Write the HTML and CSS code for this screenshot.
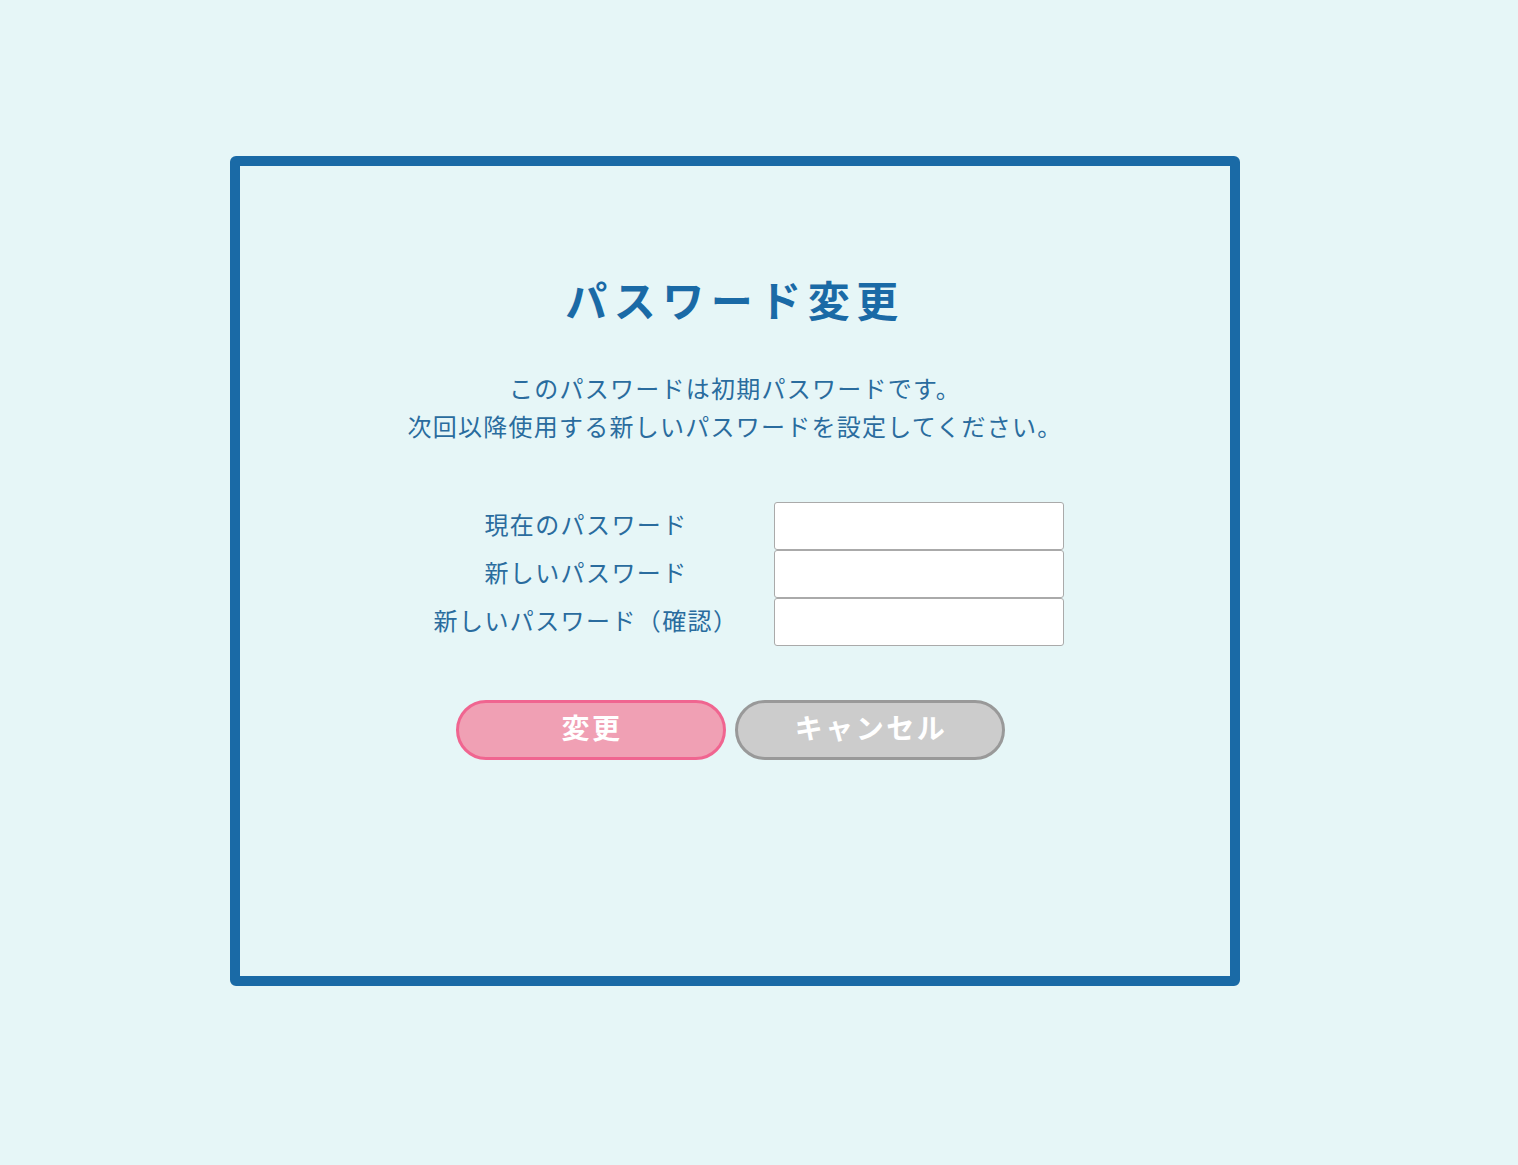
FILE: index.html
```html
<!DOCTYPE html>
<html lang="ja">
<head>
<meta charset="utf-8">
<title>パスワード変更</title>
<link rel="stylesheet" href="styles.css">
</head>
<body>
<div class="panel">
  <h1 class="title">パスワード変更</h1>
  <p class="lead">このパスワードは初期パスワードです。<br>次回以降使用する新しいパスワードを設定してください。</p>
  <form class="form">
    <label class="label" for="cur">現在のパスワード</label>
    <input class="field" id="cur" type="password">
    <label class="label" for="new1">新しいパスワード</label>
    <input class="field" id="new1" type="password">
    <label class="label" for="new2">新しいパスワード（確認）</label>
    <input class="field" id="new2" type="password">
  </form>
  <div class="actions">
    <button class="btn btn-ok" type="button">変更</button>
    <button class="btn btn-cancel" type="button">キャンセル</button>
  </div>
</div>
</body>
</html>
```
FILE: styles.css
```css
html, body {
  margin: 0;
  padding: 0;
}
body {
  background: #e6f6f7;
  font-family: "Noto Sans CJK JP", "Noto Sans", sans-serif;
  color: #1f6ba5;
  padding-top: 156px;
  padding-bottom: 180px;
}
.panel {
  box-sizing: border-box;
  width: 1010px;
  height: 830px;
  margin-left: 230px;
  border: 10px solid #1a6aa6;
  border-radius: 6px;
  padding-top: 108px;
  display: flex;
  flex-direction: column;
  align-items: center;
}
.title {
  margin: 0;
  font-size: 42px;
  line-height: 50px;
  font-weight: 700;
  letter-spacing: 6.5px;
  color: #1a6aa6;
}
.lead {
  margin: 45px 0 0;
  font-size: 24px;
  line-height: 38px;
  letter-spacing: 1.25px;
  text-align: center;
  color: #2a6c9e;
}
.form {
  margin: 57px 0 0;
  padding-left: 16px;
  display: grid;
  grid-template-columns: 328px 290px;
  column-gap: 24px;
  grid-auto-rows: 48px;
}
.label {
  display: flex;
  align-items: center;
  justify-content: center;
  font-size: 24px;
  letter-spacing: 1.4px;
  padding-bottom: 5px;
  color: #2a6c9e;
  white-space: nowrap;
}
.field {
  box-sizing: border-box;
  width: 290px;
  height: 48px;
  margin: 0;
  border: 1px solid #aaaaaa;
  border-radius: 3px;
  background: #ffffff;
}
.actions {
  margin-top: 54px;
  display: flex;
  gap: 9px;
  padding-right: 9px;
}
.btn {
  box-sizing: border-box;
  width: 270px;
  height: 60px;
  border-radius: 30px;
  border: 3px solid;
  font-family: "Noto Sans CJK JP", "Noto Sans", sans-serif;
  font-size: 28px;
  font-weight: 700;
  letter-spacing: 2.5px;
  color: #ffffff;
  padding: 0 0 7px 2px;
  cursor: pointer;
}
.btn-ok {
  background: #f0a0b4;
  border-color: #f06590;
}
.btn-cancel {
  background: #cccccc;
  border-color: #999999;
}
```
